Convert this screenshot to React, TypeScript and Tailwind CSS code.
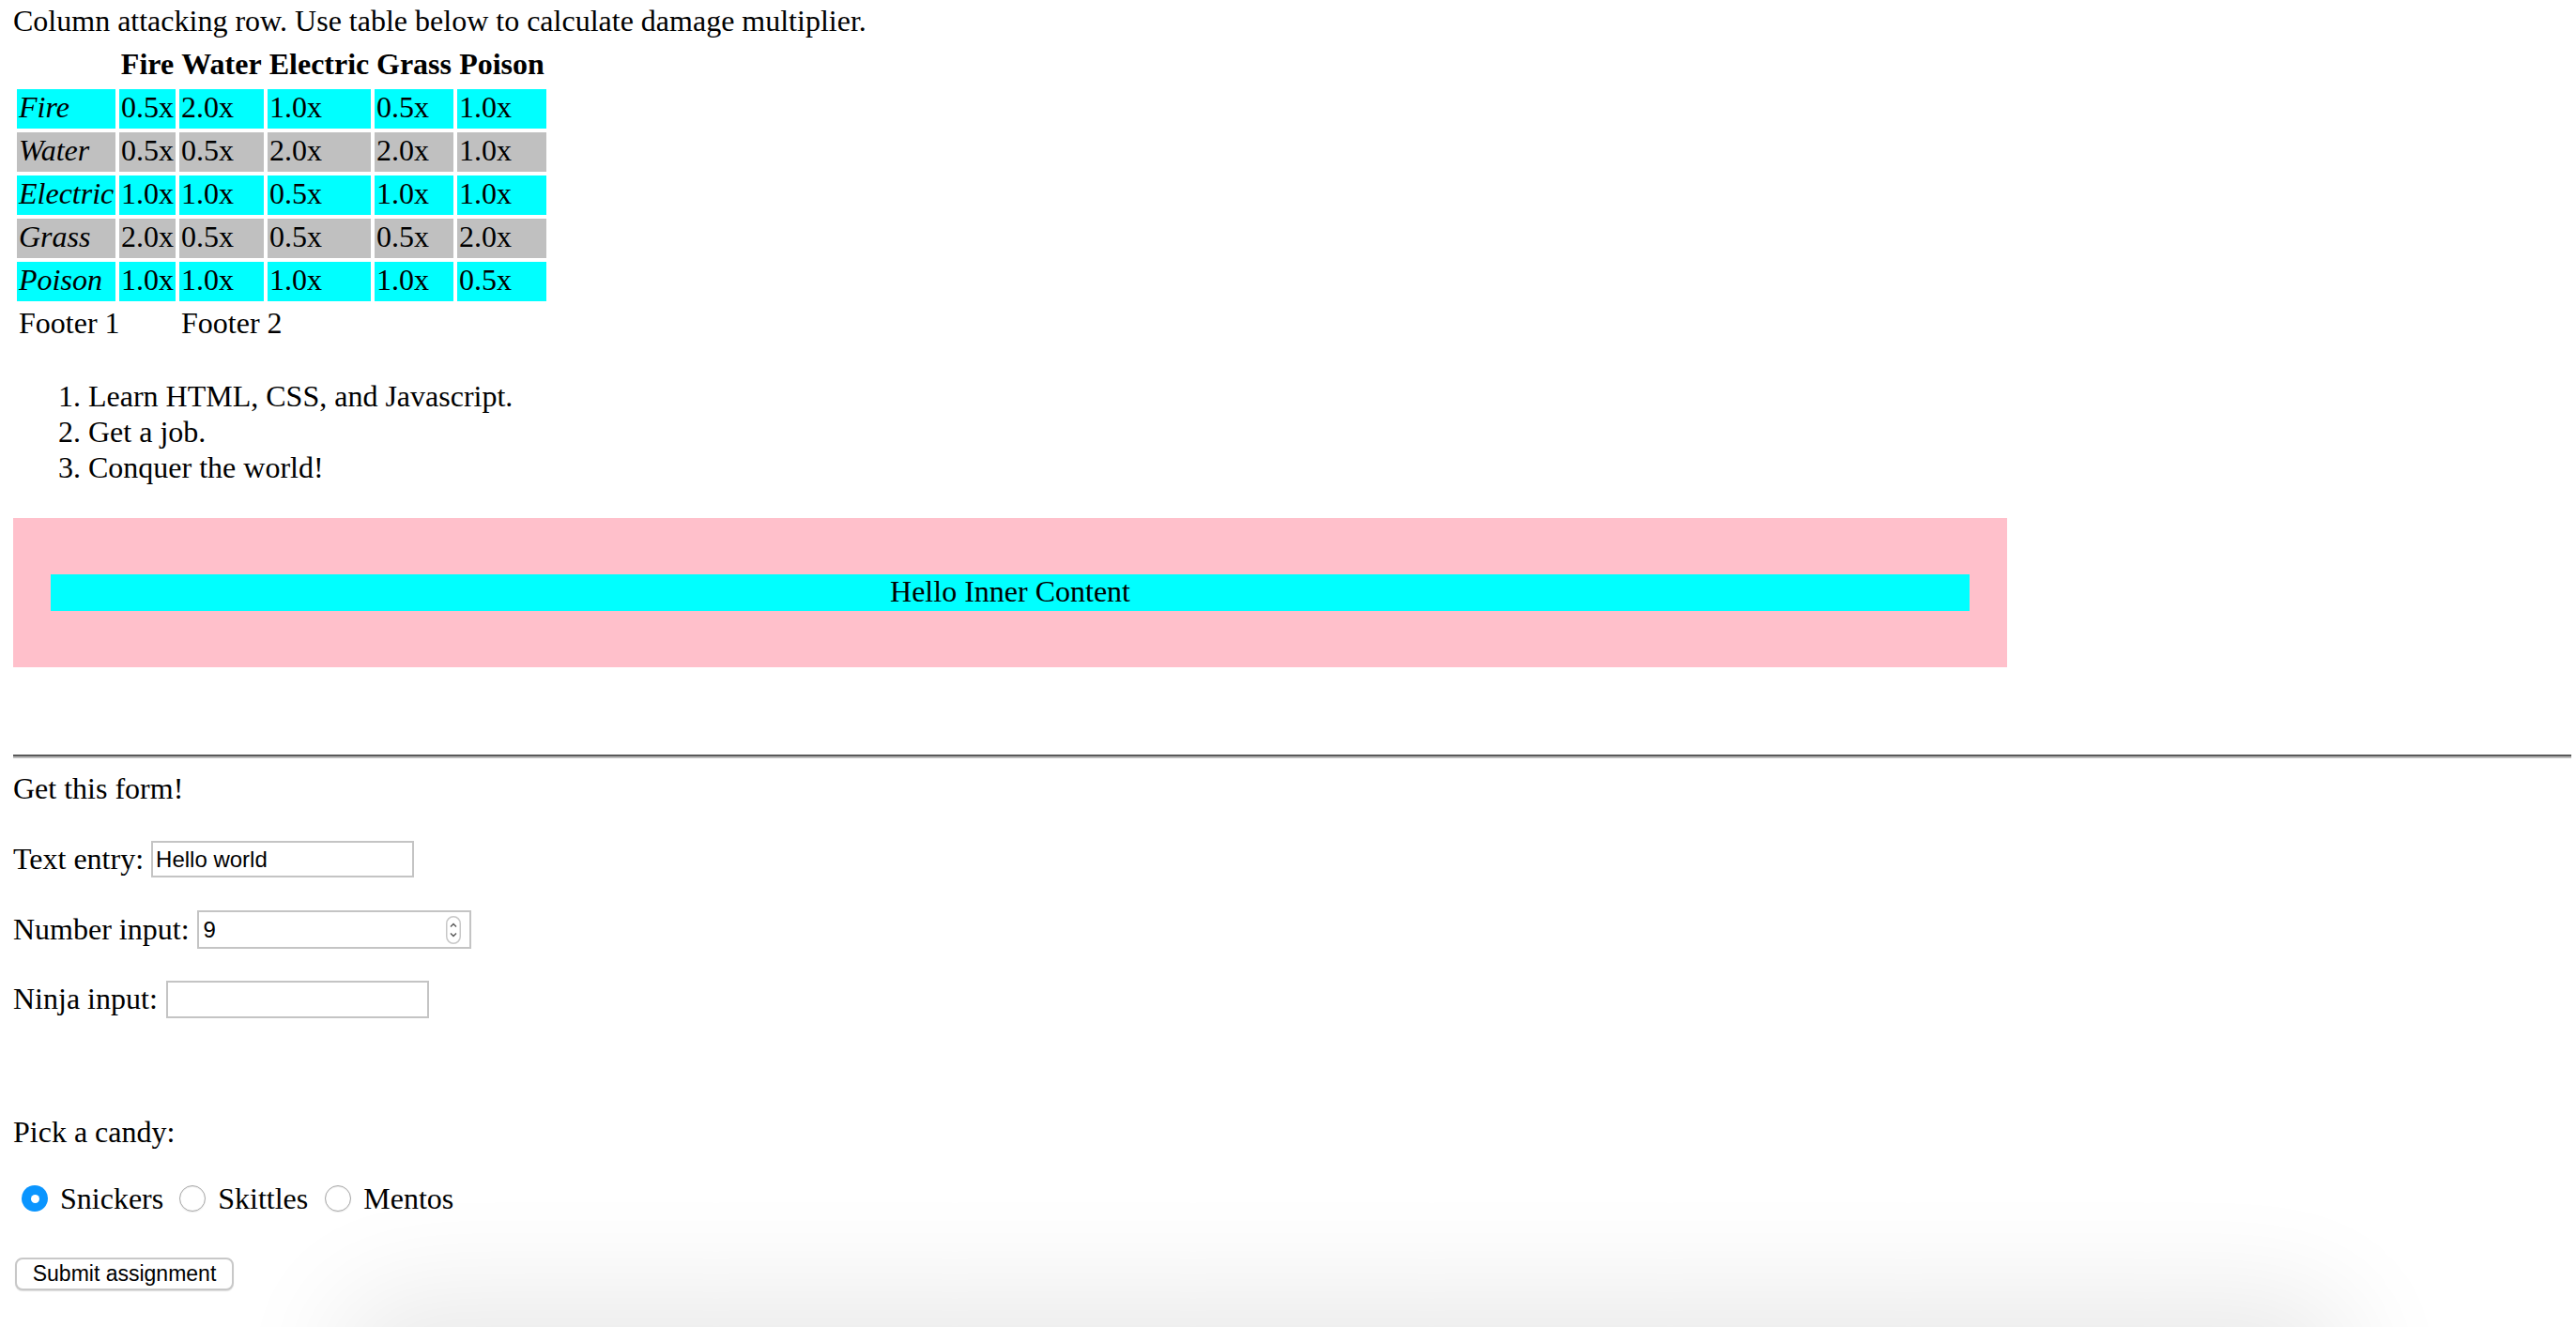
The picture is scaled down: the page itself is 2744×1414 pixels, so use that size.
import React from 'react';

const types=['Fire','Water','Electric','Grass','Poison'];
const chart:[string,string[]][]=[
  ['Fire',['0.5x','2.0x','1.0x','0.5x','1.0x']],
  ['Water',['0.5x','0.5x','2.0x','2.0x','1.0x']],
  ['Electric',['1.0x','1.0x','0.5x','1.0x','1.0x']],
  ['Grass',['2.0x','0.5x','0.5x','0.5x','2.0x']],
  ['Poison',['1.0x','1.0x','1.0x','1.0x','0.5x']],
];

const cell='h-[42px] p-0 pl-[2px] align-top text-left font-normal leading-[38px]';

function Radio({on}:{on?:boolean}){
  if(on) return(
    <span className="flex h-[28px] w-[28px] items-center justify-center rounded-full bg-[#0a95ff]">
      <span className="block h-[9px] w-[9px] rounded-full bg-white"/>
    </span>
  );
  return <span className="block h-[28px] w-[28px] rounded-full border-[1.5px] border-[#a8a8a8] bg-white shadow-[inset_0_1px_1px_rgba(0,0,0,0.08),0_1px_1px_rgba(0,0,0,0.08)]"/>;
}

export default function App(){
  return(
    <div className="relative h-[1414px] overflow-hidden bg-white pl-[14px] font-['Liberation_Serif','Times_New_Roman',serif] text-[32px] text-black">
      <div className="h-[40px] pt-[4px] leading-[36px]">Column attacking row. Use table below to calculate damage multiplier.</div>

      <table className="mt-[5px] w-[572px] table-fixed border-separate border-spacing-1">
        <colgroup>
          <col className="w-[105px]"/><col className="w-[60px]"/><col className="w-[90px]"/>
          <col className="w-[110px]"/><col className="w-[84px]"/><col className="w-[95px]"/>
        </colgroup>
        <thead>
          <tr>
            <th className="h-[42px] p-0"/>
            {types.map(t=><th key={t} className="h-[42px] p-0 align-top text-center font-bold leading-[38px]">{t}</th>)}
          </tr>
        </thead>
        <tbody>
          {chart.map(([name,vals],i)=>{
            const bg=i%2===0?'bg-[#00ffff]':'bg-[#c0c0c0]';
            return(
              <tr key={name}>
                <td className={`${cell} ${bg} italic`}>{name}</td>
                {vals.map((v,j)=><td key={j} className={`${cell} ${bg}`}>{v}</td>)}
              </tr>
            );
          })}
        </tbody>
        <tfoot>
          <tr>
            <td colSpan={2} className={cell}>Footer 1</td>
            <td colSpan={4} className={cell}>Footer 2</td>
          </tr>
        </tfoot>
      </table>

      <ol className="mt-[32px] list-decimal pl-[80px] leading-[38px]">
        <li>Learn HTML, CSS, and Javascript.</li>
        <li>Get a job.</li>
        <li>Conquer the world!</li>
      </ol>

      <div className="mt-[35px] w-[2124px] bg-[#ffc0cb] px-[40px] py-[60px]">
        <div className="h-[39px] bg-[#00ffff] text-center leading-[37px]">Hello Inner Content</div>
      </div>

      <div className="mt-[93px] h-[4px] w-[2725px] border-t-2 border-b-2 border-t-[#595959] border-b-[#bcbcbc]"/>

      <div className="mt-[13px] leading-[38px]">Get this form!</div>

      <div className="mt-[37px] flex h-[39px] items-center leading-[38px]">
        <span className="-mt-[2px]">Text entry:</span>
        <input readOnly value="Hello world" className="ml-[8px] h-[39px] w-[280px] border-2 border-[#c4c4c4] px-[3px] font-['Liberation_Sans',Arial,sans-serif] text-[24px] text-black outline-none"/>
      </div>

      <div className="mt-[35px] flex h-[41px] items-center leading-[38px]">
        <span className="-mt-[2px]">Number input:</span>
        <div className="ml-[8px] flex h-[41px] w-[292px] items-center border-2 border-[#c4c4c4] pl-[5px] pr-[9px]">
          <input readOnly value="9" className="min-w-0 flex-1 font-['Liberation_Sans',Arial,sans-serif] text-[24px] text-black outline-none"/>
          <svg width="16" height="30" viewBox="0 0 16 30">
            <rect x="0.75" y="0.75" width="14.5" height="28.5" rx="7.25" fill="#fff" stroke="#c8c8c8" strokeWidth="1.5"/>
            <path d="M5 11.5 L8 8.5 L11 11.5" fill="none" stroke="#555" strokeWidth="1.4"/>
            <path d="M5 18.5 L8 21.5 L11 18.5" fill="none" stroke="#555" strokeWidth="1.4"/>
          </svg>
        </div>
      </div>

      <div className="mt-[34px] flex h-[40px] items-center leading-[38px]">
        <span className="-mt-[2px]">Ninja input:</span>
        <input readOnly value="" className="ml-[9px] h-[40px] w-[280px] border-2 border-[#c4c4c4] px-[3px] font-['Liberation_Sans',Arial,sans-serif] text-[24px] outline-none"/>
      </div>

      <div className="mt-[102px] leading-[38px]">Pick a candy:</div>

      <div className="mt-[33px] flex h-[38px] items-center leading-[38px]">
        <span className="ml-[9px] mr-[13px]"><Radio on/></span>
        <span>Snickers</span>
        <span className="ml-[17px] mr-[13px]"><Radio/></span>
        <span>Skittles</span>
        <span className="ml-[18px] mr-[13px]"><Radio/></span>
        <span>Mentos</span>
      </div>

      <button className="mt-[44px] ml-[2px] flex h-[35px] w-[233px] items-center justify-center rounded-[8px] border-2 border-[#c8c8c8] bg-white font-['Liberation_Sans',Arial,sans-serif] text-[23px] shadow-[0_1px_1px_rgba(0,0,0,0.12)]">
        Submit assignment
      </button>

      <div className="absolute left-[420px] right-[300px] top-[1440px] h-[40px] rounded-full bg-[#d8d8d8] shadow-[0_0_120px_60px_rgba(0,0,0,0.09)]"/>
    </div>
  );
}
